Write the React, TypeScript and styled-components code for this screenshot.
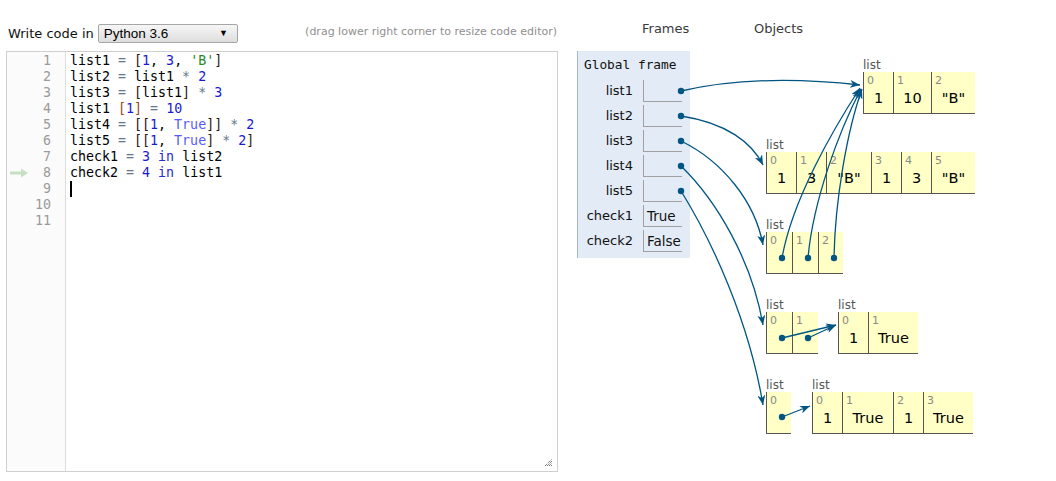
import React from "react";
import styled, { createGlobalStyle } from "styled-components";

const GlobalStyle = createGlobalStyle`
  html, body {
    margin: 0;
    padding: 0;
    background: #fff;
  }
  body {
    font-family: "DejaVu Sans", Verdana, sans-serif;
  }
`;

type Tok = [string, string];

const code: Tok[][] = [
  [["list1", "v"], [" = ", "op"], ["[", "br"], ["1", "num"], [", ", "v"], ["3", "num"], [", ", "v"], ["'B'", "str"], ["]", "br"]],
  [["list2", "v"], [" = ", "op"], ["list1", "v"], [" * ", "op"], ["2", "num"]],
  [["list3", "v"], [" = ", "op"], ["[", "br"], ["list1", "v"], ["]", "br"], [" * ", "op"], ["3", "num"]],
  [["list1 ", "v"], ["[", "bb"], ["1", "num"], ["]", "bb"], [" = ", "op"], ["10", "num"]],
  [["list4", "v"], [" = ", "op"], ["[[", "br"], ["1", "num"], [", ", "v"], ["True", "tr"], ["]]", "br"], [" * ", "op"], ["2", "num"]],
  [["list5", "v"], [" = ", "op"], ["[[", "br"], ["1", "num"], [", ", "v"], ["True", "tr"], ["]", "br"], [" * ", "op"], ["2", "num"], ["]", "br"]],
  [["check1", "v"], [" = ", "op"], ["3", "num"], [" in ", "kw"], ["list2", "v"]],
  [["check2", "v"], [" = ", "op"], ["4", "num"], [" in ", "kw"], ["list1", "v"]],
  [],
  [],
  [],
];

const tokColors: Record<string, string> = {
  v: "#000",
  op: "#687687",
  br: "#2b2010",
  bb: "#9a4f12",
  num: "#1a1acd",
  str: "#2a8a2a",
  kw: "#2b2bd0",
  tr: "#585cf6",
};

const Page = styled.div`
  display: flex;
  align-items: flex-start;
  padding: 15px 0 0 6px;
  gap: 19px;
`;

const LeftCol = styled.div`
  display: flex;
  flex-direction: column;
  width: 552px;
`;

const Toolbar = styled.div`
  height: 36px;
  display: flex;
  align-items: center;
  padding-left: 2px;
`;

const Label = styled.span`
  font-size: 13px;
  color: #111;
`;

const SelectBox = styled.div`
  margin-left: 4px;
  display: flex;
  align-items: center;
  justify-content: space-between;
  padding: 0 9px 0 5px;
  box-sizing: border-box;
  width: 140px;
  height: 19px;
  border: 1px solid #a6a6a6;
  border-radius: 2px;
  background: linear-gradient(#f6f6f6, #dedede);
  font-family: "Liberation Sans", Arial, sans-serif;
  font-size: 13.5px;
  color: #000;
`;

const Caret = styled.span`
  font-size: 9px;
`;

const Hint = styled.span`
  margin-left: auto;
  margin-right: 1px;
  margin-top: -3px;
  font-size: 11px;
  color: #8f8f8f;
`;

const Editor = styled.div`
  position: relative;
  display: flex;
  height: 421px;
  border: 1px solid #cfcfcf;
  box-sizing: border-box;
  font-family: "DejaVu Sans Mono", monospace;
  font-size: 13.3px;
  line-height: 16px;
`;

const Gutter = styled.div`
  width: 58px;
  border-right: 1px solid #dcdcdc;
  padding-top: 1px;
  background: #fbfbfb;
`;

const GutterRow = styled.div`
  height: 16px;
  display: flex;
  align-items: center;
  padding: 0 14px 0 3px;
  color: #9a9a9a;
`;

const LineNo = styled.span`
  margin-left: auto;
`;

const CodeArea = styled.div`
  padding: 1px 0 0 4px;
  flex: 1;
`;

const CodeLine = styled.div`
  height: 16px;
  white-space: pre;
`;

const Tk = styled.span<{ $k: string }>`
  color: ${(p) => tokColors[p.$k]};
`;

const Cursor = styled.span`
  display: inline-block;
  width: 2px;
  height: 16px;
  background: #000;
  vertical-align: top;
`;

const Grip = styled.svg`
  position: absolute;
  right: 5px;
  bottom: 5px;
`;

const RightCol = styled.div`
  display: flex;
  flex-direction: column;
`;

const Headings = styled.div`
  height: 36px;
  display: flex;
  align-items: center;
  padding-left: 65px;
  margin-top: -5px;
  margin-bottom: 5px;
  font-size: 13px;
  color: #3a3a3a;
`;

const Heading = styled.span<{ $w?: number }>`
  width: ${(p) => (p.$w ? `${p.$w}px` : "auto")};
`;

const Canvas = styled.div`
  position: relative;
  width: 470px;
  height: 421px;
`;

const FrameBox = styled.div`
  width: 112px;
  border-left: 1px solid #a9b6c4;
  background: #e2ebf6;
  padding: 5px 0 6px 0;
`;

const FrameTitle = styled.div`
  font-family: "DejaVu Sans Mono", monospace;
  font-size: 12.8px;
  line-height: 18px;
  padding-left: 6px;
  margin-bottom: 3px;
  color: #111;
`;

const VarRow = styled.div`
  display: grid;
  grid-template-columns: 55px 39px;
  column-gap: 10px;
  height: 25px;
  align-items: end;
`;

const VarName = styled.div`
  text-align: right;
  font-size: 13px;
  line-height: 23px;
  color: #111;
`;

const VarCell = styled.div`
  height: 21px;
  border-left: 1px solid #a0a0a0;
  border-bottom: 1px solid #a0a0a0;
  font-size: 13.5px;
  line-height: 22px;
  padding-left: 3px;
  color: #111;
`;

const HeapNode = styled.div<{ $x: number; $y: number }>`
  position: absolute;
  left: ${(p) => p.$x}px;
  top: ${(p) => p.$y}px;
`;

const TypeLabel = styled.div`
  font-size: 12px;
  line-height: 13px;
  color: #555;
  padding-left: 0;
`;

const ListRow = styled.div`
  display: flex;
`;

const Cell = styled.div<{ $w: number }>`
  width: ${(p) => p.$w}px;
  height: 41px;
  border-left: 1px solid #555;
  border-bottom: 1px solid #555;
  background: #ffffc6;
  display: flex;
  flex-direction: column;
`;

const Idx = styled.div`
  font-size: 11px;
  line-height: 13px;
  padding: 2px 0 0 3px;
  color: #888;
`;

const Val = styled.div`
  text-align: center;
  font-size: 14.5px;
  line-height: 20px;
  margin-top: 1px;
  color: #000;
`;

const Arrows = styled.svg`
  position: absolute;
  left: 0;
  top: 0;
  overflow: visible;
  pointer-events: none;
`;

const frameVars: [string, string][] = [
  ["list1", ""],
  ["list2", ""],
  ["list3", ""],
  ["list4", ""],
  ["list5", ""],
  ["check1", "True"],
  ["check2", "False"],
];

type ListData = { x: number; y: number; cells: [number, string][] };

const heap: ListData[] = [
  { x: 286, y: 8, cells: [[29, "1"], [37, "10"], [43, '"B"']] },
  { x: 189, y: 88, cells: [[29, "1"], [29, "3"], [44, '"B"'], [29, "1"], [29, "3"], [43, '"B"']] },
  { x: 189, y: 168, cells: [[25, ""], [25, ""], [24, ""]] },
  { x: 189, y: 248, cells: [[25, ""], [25, ""]] },
  { x: 261, y: 248, cells: [[29, "1"], [49, "True"]] },
  { x: 189, y: 328, cells: [[24, ""]] },
  { x: 235, y: 328, cells: [[29, "1"], [50, "True"], [29, "1"], [49, "True"]] },
];

const arrows: string[] = [
  "M104,40 C165,26 230,28 283,34",
  "M104,65 C150,72 175,92 186,114",
  "M104,90 C145,110 178,150 186,194",
  "M104,115 C140,150 175,210 186,274",
  "M104,140 C135,190 172,270 186,354",
  "M205,207 C215,150 255,80 283,37",
  "M231,207 C236,150 262,80 284,38",
  "M257,207 C258,150 270,80 285,38",
  "M205,287 L259,274",
  "M231,287 L259,274",
  "M205,366 L233,355",
];

const dots: [number, number][] = [
  [104, 40], [104, 65], [104, 90], [104, 115], [104, 140],
  [205, 207], [231, 207], [257, 207],
  [205, 287], [231, 287], [205, 366],
];

function HeapList({ data }: { data: ListData }) {
  return (
    <HeapNode $x={data.x} $y={data.y}>
      <TypeLabel>list</TypeLabel>
      <ListRow>
        {data.cells.map(([w, v], i) => (
          <Cell key={i} $w={w}>
            <Idx>{i}</Idx>
            <Val>{v}</Val>
          </Cell>
        ))}
      </ListRow>
    </HeapNode>
  );
}

export default function App() {
  return (
    <Page>
      <GlobalStyle />
      <LeftCol>
        <Toolbar>
          <Label>Write code in</Label>
          <SelectBox>
            Python 3.6
            <Caret>▼</Caret>
          </SelectBox>
          <Hint>(drag lower right corner to resize code editor)</Hint>
        </Toolbar>
        <Editor>
          <Gutter>
            {code.map((_, i) => (
              <GutterRow key={i}>
                {i === 7 && (
                  <svg width="19" height="10" viewBox="0 0 19 10">
                    <path d="M0,5 L13,5" stroke="#c7dfc3" strokeWidth="3" />
                    <path d="M11,0.5 L18,5 L11,9.5 Z" fill="#c7dfc3" />
                  </svg>
                )}
                <LineNo>{i + 1}</LineNo>
              </GutterRow>
            ))}
          </Gutter>
          <CodeArea>
            {code.map((line, i) => (
              <CodeLine key={i}>
                {line.map(([t, k], j) => (
                  <Tk key={j} $k={k}>
                    {t}
                  </Tk>
                ))}
                {i === 8 && <Cursor />}
              </CodeLine>
            ))}
          </CodeArea>
          <Grip width="8" height="8" viewBox="0 0 8 8">
            <path d="M1,8 L8,1 M3,8 L8,3 M5,8 L8,5 M7,8 L8,7" stroke="#444" strokeWidth="1" strokeDasharray="1 1" />
          </Grip>
        </Editor>
      </LeftCol>
      <RightCol>
        <Headings>
          <Heading $w={112}>Frames</Heading>
          <Heading>Objects</Heading>
        </Headings>
        <Canvas>
          <FrameBox>
            <FrameTitle>Global frame</FrameTitle>
            {frameVars.map(([n, v]) => (
              <VarRow key={n}>
                <VarName>{n}</VarName>
                <VarCell>{v}</VarCell>
              </VarRow>
            ))}
          </FrameBox>
          {heap.map((d, i) => (
            <HeapList key={i} data={d} />
          ))}
          <Arrows width="470" height="421">
            <defs>
              <marker
                id="head"
                markerWidth="10"
                markerHeight="8"
                refX="10"
                refY="4"
                orient="auto"
                markerUnits="userSpaceOnUse"
              >
                <path d="M0,0 L10,4 L0,8 L3,4 Z" fill="#005583" />
              </marker>
            </defs>
            {arrows.map((d, i) => (
              <path key={i} d={d} fill="none" stroke="#005583" strokeWidth="1.3" markerEnd="url(#head)" />
            ))}
            {dots.map(([x, y], i) => (
              <circle key={i} cx={x} cy={y} r="3.2" fill="#005583" />
            ))}
          </Arrows>
        </Canvas>
      </RightCol>
    </Page>
  );
}
